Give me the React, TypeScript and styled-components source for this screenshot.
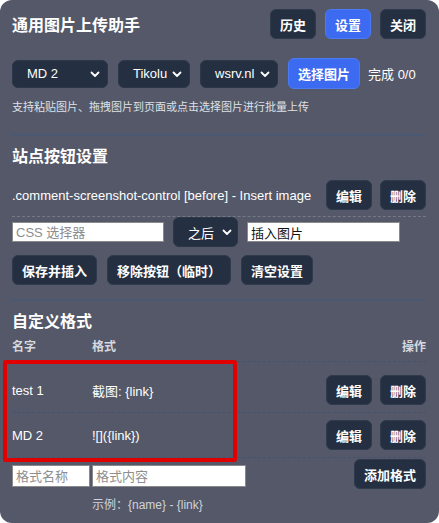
import React from "react";
import styled, { createGlobalStyle } from "styled-components";

const Global = createGlobalStyle`
  html, body { margin: 0; padding: 0; background: #ffffff; }
  body { font-family: "Liberation Sans", "Noto Sans CJK SC", sans-serif; }
  * { box-sizing: border-box; }
`;

const Panel = styled.div`
  position: relative;
  width: 439px;
  height: 523px;
  background: #555868;
  border-radius: 12px;
  padding: 9px 13px 0 12px;
  color: #ffffff;
  display: flex;
  flex-direction: column;
  overflow: hidden;
`;

const Header = styled.div`
  display: flex;
  align-items: center;
  height: 30px;
`;

const Title = styled.h1`
  margin: 0;
  flex: 1;
  font-size: 16px;
  font-weight: 700;
  color: #ffffff;
`;

const Group = styled.div<{ $gap?: number }>`
  display: flex;
  align-items: center;
  gap: ${(p) => p.$gap ?? 9}px;
`;

const Button = styled.button<{ $primary?: boolean; $h?: number }>`
  height: ${(p) => p.$h ?? 30}px;
  padding: 0 9px;
  border-radius: 6px;
  border: 1px solid ${(p) => (p.$primary ? "#4a7bf5" : "#2f3a4c")};
  background: ${(p) => (p.$primary ? "#3c6af0" : "#243042")};
  color: #ffffff;
  font-family: inherit;
  font-size: 13px;
  font-weight: 600;
  white-space: nowrap;
  cursor: pointer;
`;

const Toolbar = styled.div`
  display: flex;
  align-items: center;
  gap: 10px;
  margin-top: 19px;
  height: 31px;
`;

const SelectBox = styled.div<{ $w: number; $h?: number; $pl?: number; $pr?: number }>`
  width: ${(p) => p.$w}px;
  height: ${(p) => p.$h ?? 28}px;
  border-radius: 6px;
  background: #243042;
  border: 1px solid #2c3748;
  display: flex;
  align-items: center;
  justify-content: space-between;
  padding: 0 ${(p) => p.$pr ?? 6}px 0 ${(p) => p.$pl ?? 14}px;
  font-size: 13px;
  color: #ffffff;
`;

const Status = styled.span`
  font-size: 13px;
  color: #ffffff;
  margin-left: -2px;
`;

const Hint = styled.p`
  margin: 11px 0 0;
  font-size: 11px;
  color: #dfe1e6;
  line-height: 14px;
`;

const Divider = styled.div<{ $top: number }>`
  height: 2px;
  background: #4b5872;
  margin: ${(p) => p.$top}px 0 0;
`;

const SectionTitle = styled.h2`
  margin: 11px 0 0;
  font-size: 16px;
  font-weight: 700;
  line-height: 20px;
`;

const SiteRow = styled.div`
  display: flex;
  align-items: center;
  margin-top: 13px;
  padding-bottom: 6px;
  border-bottom: 1px dashed #747987;
`;

const SiteText = styled.span`
  flex: 1;
  font-size: 13px;
  color: #ffffff;
`;

const InputRow = styled.div`
  display: flex;
  align-items: center;
  gap: 9px;
`;

const TextInput = styled.input<{ $w: number; $h?: number }>`
  width: ${(p) => p.$w}px;
  height: ${(p) => p.$h ?? 20}px;
  border: 1px solid #8a8a8a;
  background: #ffffff;
  padding: 0 3px;
  font-family: inherit;
  font-size: 13px;
  color: #111111;
  &::placeholder { color: #8e8e8e; }
`;

const ButtonRow = styled.div`
  display: flex;
  gap: 10px;
  margin-top: 8px;
`;

const TableHead = styled.div`
  display: grid;
  grid-template-columns: 80px 1fr auto;
  margin-top: 8px;
  padding-bottom: 7px;
  border-bottom: 1px dashed #46536c;
  font-size: 12px;
  line-height: 14px;
  font-weight: 700;
  color: #d6d8de;
`;

const TableRow = styled.div<{ $first?: boolean }>`
  display: grid;
  grid-template-columns: 80px 1fr auto;
  align-items: center;
  padding: ${(p) => (p.$first ? "13px 0 7px" : "7px 0 7px")};
  border-bottom: 1px dashed #46536c;
  font-size: 13px;
  color: #ffffff;
`;

const AddRow = styled.div`
  display: flex;
  align-items: flex-start;
  margin-top: 1px;
`;

const AddFields = styled.div`
  flex: 1;
  display: flex;
  flex-direction: column;
  padding-top: 6px;
`;

const Example = styled.span`
  margin: 8px 0 0 80px;
  font-size: 12px;
  color: #d0d3da;
`;

const Highlight = styled.div`
  position: absolute;
  left: 3px;
  top: 360px;
  width: 234px;
  height: 102px;
  border: 4px solid #e00000;
  border-radius: 3px;
  pointer-events: none;
`;

const Chevron = () => (
  <svg width="12" height="12" viewBox="0 0 12 12" fill="none">
    <path d="M2.5 4.5L6 8l3.5-3.5" stroke="#ffffff" strokeWidth="1.8" strokeLinecap="round" strokeLinejoin="round" />
  </svg>
);

const Select = ({ label, w, h, pl, pr }: { label: string; w: number; h?: number; pl?: number; pr?: number }) => (
  <SelectBox $w={w} $h={h} $pl={pl} $pr={pr}>
    <span>{label}</span>
    <Chevron />
  </SelectBox>
);

const formats = [
  { name: "test 1", fmt: "截图: {link}" },
  { name: "MD 2", fmt: "![]({link})" },
];

export default function App() {
  return (
    <>
      <Global />
      <Panel>
        <Header>
          <Title>通用图片上传助手</Title>
          <Group $gap={9}>
            <Button>历史</Button>
            <Button $primary>设置</Button>
            <Button>关闭</Button>
          </Group>
        </Header>
        <Toolbar>
          <Select label="MD 2" w={96} />
          <Select label="Tikolu" w={72} />
          <Select label="wsrv.nl" w={78} />
          <Button $primary $h={31}>选择图片</Button>
          <Status>完成 0/0</Status>
        </Toolbar>
        <Hint>支持粘贴图片、拖拽图片到页面或点击选择图片进行批量上传</Hint>
        <Divider $top={20} />
        <SectionTitle>站点按钮设置</SectionTitle>
        <SiteRow>
          <SiteText>.comment-screenshot-control [before] - Insert image</SiteText>
          <Group $gap={8}>
            <Button>编辑</Button>
            <Button>删除</Button>
          </Group>
        </SiteRow>
        <InputRow>
          <TextInput $w={152} placeholder="CSS 选择器" />
          <Select label="之后" w={65} h={30} pl={14} pr={4} />
          <TextInput $w={153} defaultValue="插入图片" />
        </InputRow>
        <ButtonRow>
          <Button>保存并插入</Button>
          <Button>移除按钮（临时）</Button>
          <Button>清空设置</Button>
        </ButtonRow>
        <Divider $top={14} />
        <SectionTitle>自定义格式</SectionTitle>
        <TableHead>
          <span>名字</span>
          <span>格式</span>
          <span>操作</span>
        </TableHead>
        {formats.map((f, i) => (
          <TableRow key={f.name} $first={i === 0}>
            <span>{f.name}</span>
            <span>{f.fmt}</span>
            <Group $gap={8}>
              <Button>编辑</Button>
              <Button>删除</Button>
            </Group>
          </TableRow>
        ))}
        <AddRow>
          <AddFields>
            <Group $gap={2}>
              <TextInput $w={78} $h={22} placeholder="格式名称" />
              <TextInput $w={154} $h={22} placeholder="格式内容" />
            </Group>
            <Example>示例：{"{name}"} - {"{link}"}</Example>
          </AddFields>
          <Button>添加格式</Button>
        </AddRow>
        <Highlight />
      </Panel>
    </>
  );
}
